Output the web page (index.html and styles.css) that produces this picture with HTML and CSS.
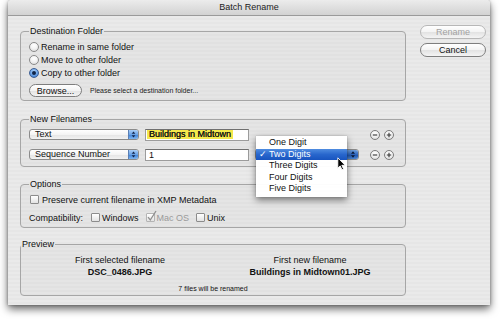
FILE: index.html
```html
<!DOCTYPE html>
<html>
<head>
<meta charset="utf-8">
<title>Batch Rename</title>
<link rel="stylesheet" href="styles.css">
</head>
<body>
<div class="window">
  <div class="titlebar">Batch Rename</div>
  <div class="body">
    <div class="main">
      <fieldset class="group dest">
        <legend>Destination Folder</legend>
        <div class="radio-row"><span class="radio"></span><span>Rename in same folder</span></div>
        <div class="radio-row"><span class="radio"></span><span>Move to other folder</span></div>
        <div class="radio-row"><span class="radio on"></span><span>Copy to other folder</span></div>
        <div class="browse-row"><span class="btn browse">Browse...</span><span class="hint">Please select a destination folder...</span></div>
      </fieldset>

      <fieldset class="group names">
        <legend>New Filenames</legend>
        <div class="name-grid">
          <div class="popup"><span class="ptext">Text</span><span class="stepper"><svg width="10" height="9" viewBox="0 0 10 9"><path d="M3 3.8h4L5 1.3z M3 5.2h4L5 7.7z" fill="#13254a"/></svg></span></div>
          <div class="field"><span class="hl">Buildings in Midtown</span></div>
          <div></div>
          <div class="pm"><span class="circ"><svg width="8" height="8" viewBox="0 0 8 8"><path d="M1.8 4h4.4" stroke="#333" stroke-width="1.1"/></svg></span><span class="circ"><svg width="8" height="8" viewBox="0 0 8 8"><path d="M1.8 4h4.4M4 1.8v4.4" stroke="#333" stroke-width="1.1"/></svg></span></div>

          <div class="popup"><span class="ptext">Sequence Number</span><span class="stepper"><svg width="10" height="9" viewBox="0 0 10 9"><path d="M3 3.8h4L5 1.3z M3 5.2h4L5 7.7z" fill="#13254a"/></svg></span></div>
          <div class="field"><span class="plain">1</span></div>
          <div class="popup pressed"><span class="ptext"></span><span class="stepper dark"><svg width="10" height="9" viewBox="0 0 10 9"><path d="M3 3.8h4L5 1.3z M3 5.2h4L5 7.7z" fill="#0c1a36"/></svg></span></div>
          <div class="pm"><span class="circ"><svg width="8" height="8" viewBox="0 0 8 8"><path d="M1.8 4h4.4" stroke="#333" stroke-width="1.1"/></svg></span><span class="circ"><svg width="8" height="8" viewBox="0 0 8 8"><path d="M1.8 4h4.4M4 1.8v4.4" stroke="#333" stroke-width="1.1"/></svg></span></div>

          <ul class="menu">
            <li>One Digit</li>
            <li class="sel"><span class="check">✓</span>Two Digits</li>
            <li>Three Digits</li>
            <li>Four Digits</li>
            <li>Five Digits</li>
          </ul>
          <svg class="cursor" width="10" height="14" viewBox="0 0 10 14"><path d="M0.8 0.8V11.2L3.2 8.9L5 12.8L6.6 12.1L4.8 8.3H8.2Z" fill="#000" stroke="#fff" stroke-width="0.9" stroke-linejoin="round"/></svg>
        </div>
      </fieldset>

      <fieldset class="group options">
        <legend>Options</legend>
        <div class="opt-row"><span class="cb first"></span><span>Preserve current filename in XMP Metadata</span></div>
        <div class="opt-row compat">
          <span class="clabel">Compatibility:</span>
          <span class="citem"><span class="cb"></span><span>Windows</span></span>
          <span class="citem disabled"><span class="cb checked"><svg width="11" height="12" viewBox="0 0 11 12"><path d="M2 7.2L4.3 10L10 1" fill="none" stroke="#8e8e8e" stroke-width="1.3"/></svg></span><span>Mac OS</span></span>
          <span class="citem"><span class="cb"></span><span>Unix</span></span>
        </div>
      </fieldset>

      <fieldset class="group preview">
        <legend>Preview</legend>
        <div class="pv-grid">
          <div class="pv-col"><div class="pv-head">First selected filename</div><div class="pv-name">DSC_0486.JPG</div></div>
          <div class="pv-col"><div class="pv-head">First new filename</div><div class="pv-name">Buildings in Midtown01.JPG</div></div>
        </div>
        <div class="pv-count">7 files will be renamed</div>
      </fieldset>
    </div>

    <div class="side">
      <span class="btn action disabled">Rename</span>
      <span class="btn action">Cancel</span>
    </div>
  </div>
</div>
</body>
</html>
```
FILE: styles.css
```css
* { box-sizing: border-box; }

html, body {
  margin: 0;
  padding: 0;
  background: #ffffff;
}

body {
  font-family: "Liberation Sans", Arial, sans-serif;
  font-size: 9px;
  color: #111;
  width: 500px;
  height: 320px;
  overflow: hidden;
}

.window {
  margin-left: 8px;
  width: 482px;
  height: 305px;
  background: repeating-linear-gradient(to bottom, #eaeaea 0, #eaeaea 2px, #e6e6e6 2px, #e6e6e6 4px);
  box-shadow: 0 4px 9px rgba(0, 0, 0, 0.6), 0 0 3px rgba(0, 0, 0, 0.35);
  border-radius: 4px 4px 0 0;
  display: flex;
  flex-direction: column;
}

.titlebar {
  height: 16px;
  line-height: 15px;
  text-align: center;
  font-size: 9px;
  color: #222;
  background: linear-gradient(to bottom, #ececec, #d2d2d2);
  border-bottom: 1px solid #9a9a9a;
  border-radius: 4px 4px 0 0;
}

.body {
  flex: 1;
  display: flex;
  padding: 10px 4px 9px 12px;
  gap: 14px;
}

.main {
  width: 386px;
  display: flex;
  flex-direction: column;
}

.side {
  width: 66px;
  margin-top: -1px;
  display: flex;
  flex-direction: column;
  gap: 4px;
}

/* group boxes */
.group {
  margin: 0;
  min-width: 0;
  border: 1px solid #a6a6a6;
  border-radius: 4px;
  padding: 3px 8px 3px 8px;
  background: rgba(0, 0, 0, 0.018);
}

.group legend {
  padding: 0 1px;
  font-size: 9px;
  line-height: 11px;
  color: #111;
}

.names { margin-top: 13px; padding-bottom: 5px; }
.options { margin-top: 12px; }
.preview { margin-top: 11px; padding: 4px 0 1px 0; }

/* radios */
.radio-row {
  height: 13px;
  display: flex;
  align-items: center;
  gap: 2px;
}

.radio {
  width: 10px;
  height: 10px;
  border-radius: 50%;
  border: 1px solid #8a8a8a;
  background: radial-gradient(circle at 50% 30%, #ffffff 0, #f4f4f4 45%, #d6d6d6 100%);
  position: relative;
}

.radio.on {
  border-color: #3d5f94;
  background: radial-gradient(circle at 50% 35%, #b9d9fb 0, #6ea6e9 50%, #2f6cc4 100%);
}

.radio.on::after {
  content: "";
  position: absolute;
  left: 2px;
  top: 2px;
  width: 4px;
  height: 4px;
  border-radius: 50%;
  background: #0f2448;
}

.browse-row {
  margin-top: 5px;
  height: 13px;
  display: flex;
  align-items: center;
}

.btn {
  display: flex;
  align-items: center;
  justify-content: center;
  border: 1px solid #7e7e7e;
  border-radius: 7px;
  background: linear-gradient(to bottom, #ffffff 0, #f3f3f3 50%, #e2e2e2 51%, #f4f4f4 100%);
  font-size: 9px;
  color: #111;
}

.browse {
  width: 53px;
  height: 13px;
}

.hint {
  margin-left: 8px;
  font-size: 7px;
  color: #222;
}

.action {
  width: 66px;
  height: 14px;
}

.action.disabled {
  color: #a2a2a2;
  border-color: #b7b7b7;
}

/* new filenames */
.name-grid {
  position: relative;
  display: grid;
  grid-template-columns: 110px 104px 104px 29px;
  grid-auto-rows: 13px;
  column-gap: 6px;
  row-gap: 7px;
  align-items: center;
}

.popup {
  height: 11px;
  display: flex;
  align-items: center;
  border: 1px solid #8b8b8b;
  border-radius: 3px;
  background: linear-gradient(to bottom, #ffffff 0, #f4f4f4 50%, #e4e4e4 51%, #f2f2f2 100%);
  overflow: hidden;
}

.ptext {
  padding-left: 5px;
  line-height: 9px;
  flex: 1;
}

.stepper {
  width: 10px;
  height: 100%;
  display: flex;
  align-items: center;
  justify-content: center;
  background: linear-gradient(to bottom, #a9cdf6 0, #6aa3e6 50%, #3d80d8 51%, #7fb6f0 100%);
  border-left: 1px solid #5a7fb5;
}

.stepper.dark {
  width: 12px;
  background: linear-gradient(to bottom, #6f9fdc 0, #2e66bf 50%, #1a4fa8 51%, #4c86d4 100%);
}

.field {
  height: 12px;
  border: 1px solid #9c9c9c;
  border-top-color: #6f6f6f;
  background: #ffffff;
  padding-left: 1px;
  display: flex;
  align-items: center;
}

.hl {
  background: #f4e94c;
  padding: 0 2px;
  line-height: 9px;
  color: #1c1c1c;
  text-shadow: 0 0 0.4px #000;
}

.plain {
  padding-left: 2px;
}

.pm {
  justify-self: end;
  display: flex;
  gap: 4px;
}

.circ {
  width: 10px;
  height: 10px;
  border-radius: 50%;
  border: 1px solid #7c7c7c;
  background: radial-gradient(circle at 50% 30%, #ffffff 0, #f0f0f0 50%, #d4d4d4 100%);
  display: flex;
  align-items: center;
  justify-content: center;
}

.menu {
  position: absolute;
  left: 227px;
  top: 8px;
  width: 91px;
  margin: 0;
  padding: 1px 0 2px 0;
  list-style: none;
  background: rgba(255, 255, 255, 0.97);
  box-shadow: 0 3px 7px rgba(0, 0, 0, 0.5), 0 0 1px rgba(0, 0, 0, 0.3);
}

.menu li {
  position: relative;
  height: 11.5px;
  line-height: 11.5px;
  padding-left: 13px;
  font-size: 9px;
  color: #111;
}

.menu li.sel {
  color: #ffffff;
  background: linear-gradient(to bottom, #4f8ce0 0, #2866cc 50%, #1854bf 100%);
}

.check {
  position: absolute;
  left: 3px;
  top: 0;
}

.cursor {
  position: absolute;
  left: 308px;
  top: 29px;
}

/* options */
.opt-row {
  height: 13px;
  display: flex;
  align-items: center;
  gap: 3px;
}

.compat {
  margin-top: 5px;
  gap: 0;
}

.cb {
  position: relative;
  width: 9px;
  height: 9px;
  border: 1px solid #8c8c8c;
  border-radius: 1px;
  background: linear-gradient(to bottom, #ffffff, #e3e3e3);
  flex: none;
}

.cb.first {
  margin-left: 1px;
}

.cb svg {
  position: absolute;
  left: -1px;
  top: -4px;
}

.clabel {
  margin-right: 8px;
}

.citem {
  display: flex;
  align-items: center;
  gap: 2px;
  margin-right: 7px;
}

.citem.disabled {
  color: #9a9a9a;
}

.citem.disabled .cb {
  border-color: #b4b4b4;
}

/* preview */
.pv-grid {
  display: grid;
  grid-template-columns: 1fr 1fr;
  padding-left: 4px;
}

.pv-col {
  text-align: center;
}

.pv-head {
  line-height: 12px;
}

.pv-name {
  line-height: 13px;
  font-weight: bold;
}

.pv-count {
  margin-top: 5px;
  text-align: center;
  font-size: 7px;
  line-height: 10px;
}
```
